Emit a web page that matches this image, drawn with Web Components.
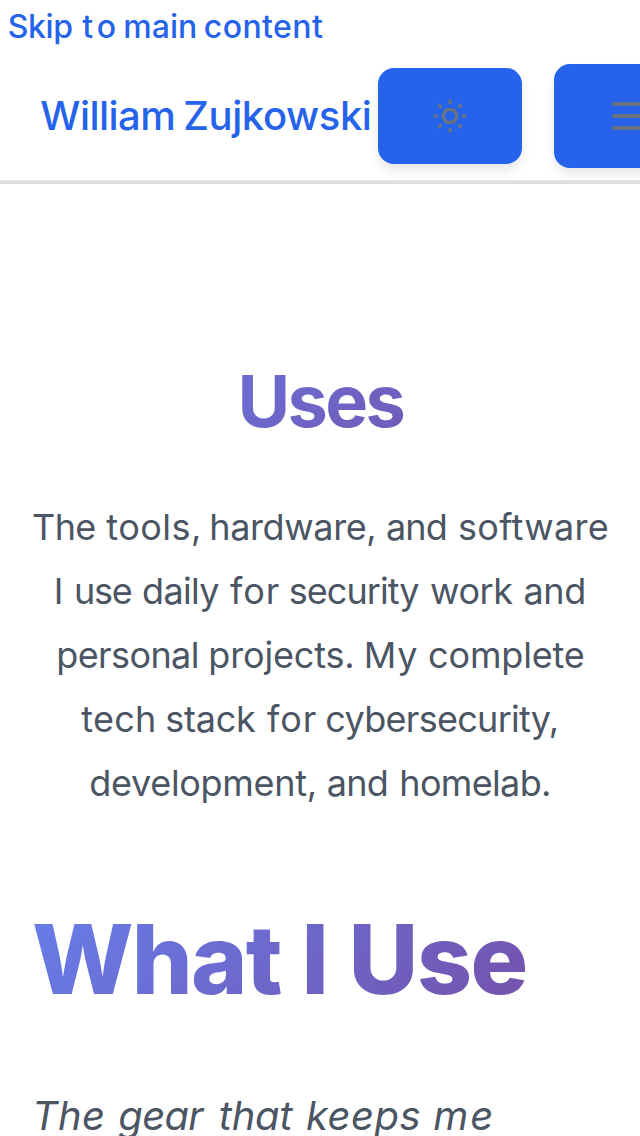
<!DOCTYPE html>
<html lang="en"><head><meta charset="utf-8"><title>Uses - William Zujkowski</title>
<style>html,body{margin:0;height:1136px;overflow:hidden;background:#fff;font-family:Inter,"Liberation Sans",sans-serif}</style></head><body>
<uses-page></uses-page>
<script>
const define=(name,html)=>customElements.define(name,class extends HTMLElement{constructor(){super();this.attachShadow({mode:'open'}).innerHTML=html;}});
// One line of text whose words are tracked to fill the given ink extents.
// extents: left and right edge of each word, relative to the line's start.
const pen=document.createElement('canvas').getContext('2d');
customElements.define('tracked-line',class extends HTMLElement{
  constructor(){super();this.attachShadow({mode:'open'}).innerHTML='<style>:host{display:block;text-align:left;white-space:pre}span{display:inline}</style><div></div>';}
  connectedCallback(){
    const box=this.shadowRoot.querySelector('div');
    if(box.firstChild)return;
    const cs=getComputedStyle(this);
    pen.font=`${cs.fontStyle} ${cs.fontWeight} ${cs.fontSize} Inter, "Liberation Sans", sans-serif`;
    const ext=this.getAttribute('extents').split(' ').map(Number);
    const gap=pen.measureText(' ').width;
    let x=0;
    this.getAttribute('text').split(' ').forEach((word,i)=>{
      if(i){box.append(' ');x+=gap;}
      const m=pen.measureText(word),n=word.length;
      const ink=m.actualBoundingBoxRight+m.actualBoundingBoxLeft;
      const ls=n>1?(ext[2*i+1]-ext[2*i]-ink)/(n-1):0;
      const start=ext[2*i]+m.actualBoundingBoxLeft;
      const s=document.createElement('span');
      s.textContent=word;s.style.letterSpacing=ls+'px';s.style.marginLeft=(start-x)+'px';
      box.append(s);x=start+m.width+ls*n;
    });
  }
});
define('skip-link',`<style>:host{display:block;height:52px;box-sizing:border-box;padding-top:1px}a{display:block;font-size:32px;line-height:52px;font-weight:500;color:#2563eb;text-decoration:none}</style><a href="#main"><tracked-line text="Skip to main content" extents="8.8 72.3 82.3 114.8 125.3 195 204.8 323"></tracked-line></a>`);
define('icon-button',`<style>:host{display:block;flex:none}button{display:flex;align-items:center;justify-content:center;width:var(--w,144px);height:var(--h,96px);border:0;padding:0;border-radius:16px;background:#2563eb;color:#6b7280;box-shadow:0 8px 12px -2px rgba(0,0,0,.08),0 4px 16px rgba(0,0,0,.03)}</style><button><slot></slot></button>`);
define('site-header',`<style>:host{display:flex;align-items:center;height:128px;border-bottom:2px solid #e3e4e8;box-shadow:0 2px 0 #dcdde1;margin-bottom:2px}.brand{flex:none;width:378px;font-size:40px;line-height:56px;font-weight:500;color:#2563eb}.menu{margin-left:32px;--h:104px;--w:152px}</style><tracked-line class="brand" text="William Zujkowski" extents="40.3 173.3 185.3 369.8"></tracked-line><icon-button><svg width="40" height="40" viewBox="0 0 24 24" fill="none" stroke="currentColor" stroke-width="2" stroke-linecap="round"><circle cx="12" cy="12" r="4"/><path d="M12 3v1M12 20v1M3 12h1M20 12h1M5.64 5.64l.7.7M17.66 17.66l.7.7M5.64 18.36l.7-.7M17.66 6.34l.7-.7"/></svg></icon-button><icon-button class="menu"><svg width="48" height="48" viewBox="0 0 24 24" fill="none" stroke="currentColor" stroke-width="2" stroke-linecap="round"><path d="M4 6h16M4 12h16M4 18h16"/></svg></icon-button>`);
define('page-intro',`<style>:host{display:block;padding:0 32px}h1{margin:0;font-size:72px;line-height:90px;font-weight:700;color:transparent;background:linear-gradient(135deg,#667eea,#764ba2);background-clip:text}.copy{margin:49px 0 0;color:#4b5563;font-size:36px;line-height:64px}.copy tracked-line{margin-left:-32px}</style><h1><tracked-line text="Uses" extents="209.5 371.5"></tracked-line></h1><div class="copy">
<tracked-line text="The tools, hardware, and software" extents="33 95.3 106.3 199 211.3 374.3 387 445.7 459 607.7"></tracked-line>
<tracked-line text="I use daily for security work and" extents="56.7 61 76 131.7 143 219.3 230 278.7 289.7 419.3 431 513.3 524.4 584.3"></tracked-line>
<tracked-line text="personal projects. My complete" extents="58.3 196.7 210.3 352.3 366.7 417.3 429 583.7"></tracked-line>
<tracked-line text="tech stack for cybersecurity," extents="81.3 154 166.3 256 267 315.7 326.3 556.7"></tracked-line>
<tracked-line text="development, and homelab." extents="90.3 314.7 327.7 386.7 401.3 549"></tracked-line></div>`);
define('uses-content',`<style>:host{display:block;padding:84px 32px 0}h2{margin:0;font-size:96px;line-height:120px;font-weight:800;color:transparent;background:linear-gradient(135deg,#667eea,#764ba2);background-clip:text}.lead{margin:61px 0 0 -32px;font-size:40px;line-height:72px;font-style:italic;color:#4b5563}</style><h2><tracked-line text="What I Use" extents="2 249.7 274.5 291.5 321.5 493.5"></tracked-line></h2><tracked-line class="lead" text="The gear that keeps me" extents="36 102.9 118.3 205.3 219.7 293.5 307 419.5 434.3 491.3"></tracked-line>`);
define('uses-page',`<style>:host{display:block;width:640px;height:1136px;overflow:hidden}main{padding-top:172px}</style><skip-link></skip-link><site-header></site-header><main id="main"><page-intro></page-intro><uses-content></uses-content></main>`);
</script></body></html>
